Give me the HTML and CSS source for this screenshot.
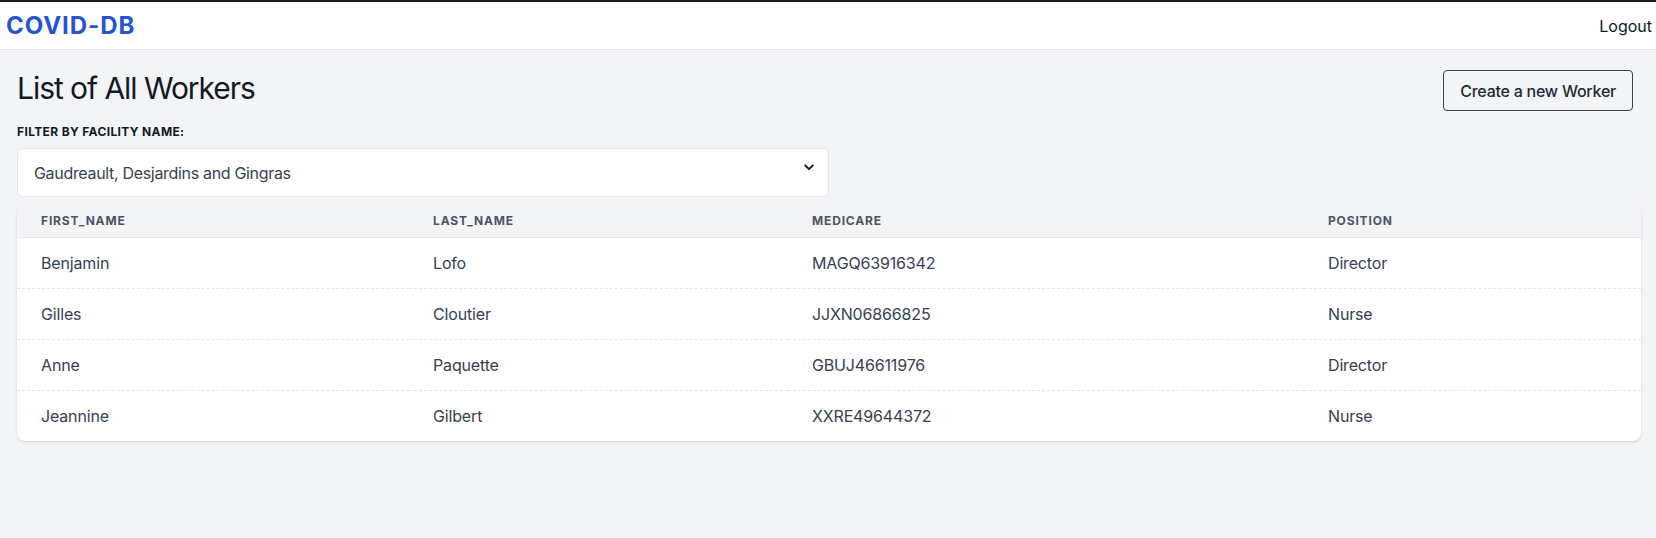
FILE: index.html
```html
<!DOCTYPE html>
<html lang="en">
<head>
<meta charset="utf-8">
<title>COVID-DB</title>
<link rel="stylesheet" href="styles.css">
</head>
<body>
<header class="topbar">
  <a class="logo" href="#">COVID-DB</a>
  <a class="logout" href="#">Logout</a>
</header>
<main class="page">
  <div class="title-row">
    <h1 class="title">List of All Workers</h1>
    <button class="btn" type="button">Create a new Worker</button>
  </div>
  <label class="filter-label" for="facility">Filter by facility name:</label>
  <div class="select-wrap">
    <select id="facility" class="select">
      <option>Gaudreault, Desjardins and Gingras</option>
    </select>
    <svg class="chevron" width="10" height="7" viewBox="0 0 10 7" aria-hidden="true"><path d="M1.2 1.3 L5 5.1 L8.8 1.3" fill="none" stroke="#111" stroke-width="1.8" stroke-linecap="round" stroke-linejoin="round"/></svg>
  </div>
  <div class="card">
    <table class="table">
      <colgroup>
        <col class="c1"><col class="c2"><col class="c3"><col class="c4">
      </colgroup>
      <thead>
        <tr><th>first_name</th><th>last_name</th><th>medicare</th><th>position</th></tr>
      </thead>
      <tbody>
        <tr><td>Benjamin</td><td>Lofo</td><td>MAGQ63916342</td><td>Director</td></tr>
        <tr><td>Gilles</td><td>Cloutier</td><td>JJXN06866825</td><td>Nurse</td></tr>
        <tr><td>Anne</td><td>Paquette</td><td>GBUJ46611976</td><td>Director</td></tr>
        <tr><td>Jeannine</td><td>Gilbert</td><td>XXRE49644372</td><td>Nurse</td></tr>
      </tbody>
    </table>
  </div>
</main>
</body>
</html>
```
FILE: styles.css
```css
* { box-sizing: border-box; }
html, body { margin: 0; padding: 0; }
body {
  background: #f3f4f6;
  font-family: Inter, "Noto Sans", "Liberation Sans", sans-serif;
  color: #111827;
  min-height: 538px;
}
.topbar {
  display: flex;
  justify-content: space-between;
  align-items: center;
  background: #ffffff;
  border-top: 2px solid #1c1c1c;
  border-bottom: 1px solid #e5e7eb;
  height: 50px;
  padding: 0 4px 0 6px;
}
.logo {
  font-size: 24px;
  line-height: 32px;
  font-weight: 700;
  letter-spacing: 0.04em;
  color: #2554d4;
  text-decoration: none;
}
.logout {
  font-size: 16px;
  line-height: 24px;
  color: #111827;
  text-decoration: none;
}
.page {
  padding: 20px 15px 0 17px;
}
.title-row {
  display: flex;
  justify-content: space-between;
  align-items: flex-start;
}
.title {
  margin: 0;
  font-size: 30px;
  line-height: 36px;
  font-weight: 400;
  letter-spacing: -0.035em;
  color: #111827;
}
.btn {
  margin-right: 8px;
  height: 41px;
  padding: 0 16px;
  background: transparent;
  border: 1px solid #374151;
  border-radius: 4px;
  font-family: inherit;
  font-size: 16px;
  font-weight: 500;
  letter-spacing: -0.015em;
  color: #1f2937;
}
.filter-label {
  display: block;
  margin-top: 13px;
  font-size: 12px;
  line-height: 16px;
  font-weight: 700;
  letter-spacing: 0.03em;
  text-transform: uppercase;
  color: #111827;
}
.select-wrap {
  position: relative;
  width: 812px;
  margin-top: 8px;
}
.select {
  display: block;
  width: 100%;
  appearance: none;
  -webkit-appearance: none;
  background: #ffffff;
  border: 1px solid #e5e7eb;
  border-radius: 6px;
  padding: 12px 16px;
  height: 49px;
  font-family: inherit;
  font-size: 16px;
  line-height: 24px;
  letter-spacing: -0.02em;
  color: #374151;
}
.chevron {
  position: absolute;
  right: 15px;
  top: 16px;
}
.card {
  margin-top: 9px;
  background: #ffffff;
  border-radius: 8px;
  box-shadow: 0 1px 3px rgba(0,0,0,0.1), 0 1px 2px rgba(0,0,0,0.06);
  overflow: hidden;
}
.table {
  width: 100%;
  border-collapse: collapse;
  table-layout: fixed;
}
.c1 { width: 392px; }
.c2 { width: 379px; }
.c3 { width: 516px; }
.c4 { width: auto; }
.table th {
  background: #f3f4f6;
  text-align: left;
  padding: 7px 24px 8px;
  font-size: 12px;
  line-height: 16px;
  font-weight: 700;
  letter-spacing: 0.07em;
  text-transform: uppercase;
  color: #4b5563;
  border-bottom: 1px solid #e5e7eb;
}
.table td {
  padding: 13px 24px;
  font-size: 16px;
  line-height: 24px;
  letter-spacing: -0.01em;
  color: #374151;
}
.table tbody tr + tr td {
  border-top: 1px dashed #e5e7eb;
}
```
